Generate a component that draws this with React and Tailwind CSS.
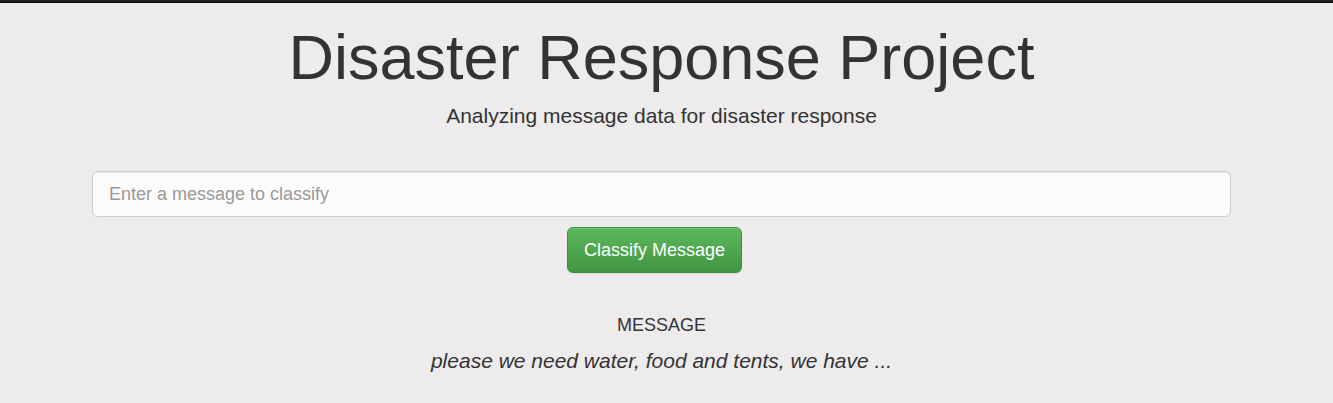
import React from "react";

const App = () => {
  return (
    <div
      className="min-h-screen bg-[#edebeb] text-[#333]"
      style={{ fontFamily: '"Liberation Sans", Arial, sans-serif' }}
    >
      <div className="h-[3px] bg-[#222] border-b border-[#080808]" />
      <div className="pl-[92px] pr-[102px]">
        <h1 className="mt-[20px] text-center text-[63px] leading-[69px] font-normal">
          Disaster Response Project
        </h1>
        <p className="mt-[9px] text-center text-[21px] leading-[30px]">
          Analyzing message data for disaster response
        </p>
        <form className="mt-[40px] flex flex-col items-center" onSubmit={(e) => e.preventDefault()}>
          <input
            type="text"
            placeholder="Enter a message to classify"
            className="w-full h-[46px] px-4 text-[18px] bg-[#fdfcfc] border border-[#ccc] rounded-md shadow-[inset_0_1px_1px_rgba(0,0,0,0.075)] placeholder:text-[#999] outline-none"
          />
          <button
            type="submit"
            className="mt-[10px] mr-[14px] h-[46px] px-4 text-[18px] text-white rounded-md border border-[#3e8f3e] bg-gradient-to-b from-[#5cb85c] to-[#419641] shadow-[inset_0_1px_0_rgba(255,255,255,0.15),0_1px_1px_rgba(0,0,0,0.075)]"
          >
            Classify Message
          </button>
        </form>
        <div className="mt-[42px] text-center">
          <h4 className="text-[18px] leading-[20px]">MESSAGE</h4>
          <p className="mt-[12px] text-[21px] leading-[28px] italic">
            please we need water, food and tents, we have ...
          </p>
        </div>
      </div>
    </div>
  );
};

export default App;
